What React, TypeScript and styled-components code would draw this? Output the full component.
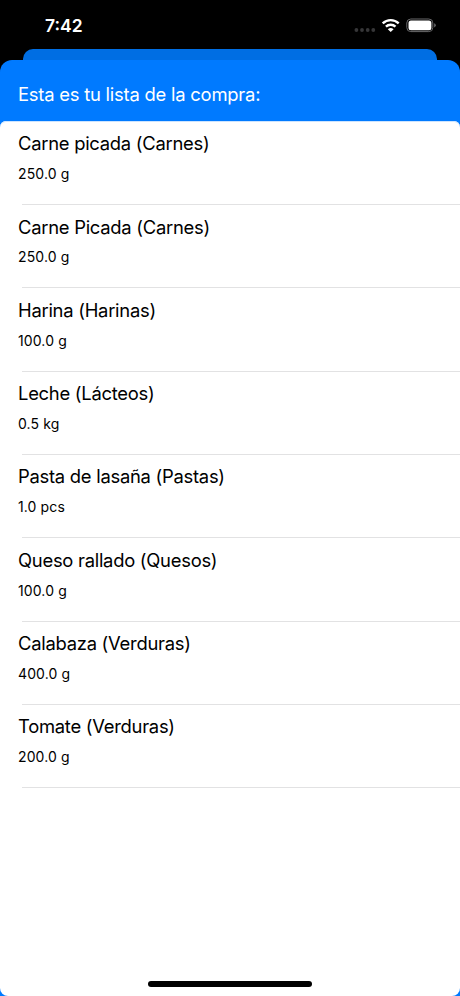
import React from "react";
import styled, { createGlobalStyle } from "styled-components";

const GlobalStyle = createGlobalStyle`
  * { box-sizing: border-box; }
  body { margin: 0; background: #000; }
`;

const Screen = styled.div`
  width: 460px;
  height: 996px;
  display: flex;
  flex-direction: column;
  overflow: hidden;
  background: #000;
  color: #000;
  font-family: Inter, "Liberation Sans", sans-serif;
`;

const StatusBar = styled.header`
  height: 49px;
  flex: none;
  display: flex;
  align-items: flex-start;
  justify-content: space-between;
  padding: 15px 24px 0 45px;
  color: #fff;
`;

const Clock = styled.span`
  font-size: 17.5px;
  line-height: 22px;
  font-weight: 600;
`;

const StatusIcons = styled.svg`
  display: block;
  width: 84px;
  height: 20px;
`;

const BackSheet = styled.div`
  height: 11px;
  flex: none;
  margin: 0 23px;
  border-radius: 10px 10px 0 0;
  background: #006ee3;
`;

const Sheet = styled.main`
  flex: 1;
  display: flex;
  flex-direction: column;
  border-radius: 12px 12px 0 0;
  background: #007aff;
`;

const Heading = styled.h1`
  margin: 0;
  height: 61px;
  flex: none;
  padding: 22px 18px 0;
  color: #fff;
  font-size: 18.4px;
  line-height: 24px;
  font-weight: 400;
  letter-spacing: -0.22px;
`;

const List = styled.ul`
  flex: 1;
  margin: 0;
  padding: 0.9px 0 0;
  list-style: none;
  border-radius: 6px 6px 8px 8px;
  box-shadow: inset 0 1px #cce4ff;
  background: #fff;
`;

const Item = styled.li`
  height: 83.3px;
  display: flex;
  flex-direction: column;
  padding: 9.35px 0 0 18px;
`;

const Name = styled.span`
  font-size: 18.4px;
  line-height: 24px;
  letter-spacing: -0.26px;
`;

const Amount = styled.span`
  margin-top: 9.8px;
  font-size: 14px;
  line-height: 18px;
  letter-spacing: 0.12px;
`;

const Divider = styled.div`
  height: 1px;
  margin: auto 0 0 4px;
  background: #e2e2e3;
`;

const HomeIndicator = styled.div`
  position: absolute;
  left: 148px;
  top: 981px;
  width: 164px;
  height: 6px;
  border-radius: 3px;
  background: #000;
`;

const items = [
  ["Carne picada (Carnes)", "250.0 g"],
  ["Carne Picada (Carnes)", "250.0 g"],
  ["Harina (Harinas)", "100.0 g"],
  ["Leche (Lácteos)", "0.5 kg"],
  ["Pasta de lasaña (Pastas)", "1.0 pcs"],
  ["Queso rallado (Quesos)", "100.0 g"],
  ["Calabaza (Verduras)", "400.0 g"],
  ["Tomate (Verduras)", "200.0 g"],
];

export default function App() {
  return (
    <Screen>
      <GlobalStyle />
      <StatusBar>
        <Clock>7:42</Clock>
        <StatusIcons viewBox="352 15 84 20">
          <g fill="#363638">
            <circle cx="356.4" cy="30" r="1.9" />
            <circle cx="362" cy="30" r="1.9" />
            <circle cx="367.7" cy="30" r="1.9" />
            <circle cx="373.3" cy="30" r="1.9" />
          </g>
          <g fill="none" stroke="#fff" strokeWidth="2.4">
            <path d="M382.7 23.4a11.5 11.5 0 0 1 16 0" />
            <path d="M385.9 26.6a7 7 0 0 1 9.6 0" />
          </g>
          <path d="M387.8 29.2a4.3 4.3 0 0 1 5.8 0l-2.9 2.9z" fill="#fff" />
          <rect x="406.8" y="19" width="26" height="12.6" rx="4" fill="none" stroke="#69696b" />
          <rect x="408.5" y="20.4" width="22.9" height="9.8" rx="2.5" fill="#fff" />
          <path d="M434.2 23.2a2.2 2.2 0 0 1 0 4.2z" fill="#69696b" />
        </StatusIcons>
      </StatusBar>
      <BackSheet />
      <Sheet>
        <Heading>Esta es tu lista de la compra:</Heading>
        <List>
          {items.map(([name, amount]) => (
            <Item key={name}>
              <Name>{name}</Name>
              <Amount>{amount}</Amount>
              <Divider />
            </Item>
          ))}
        </List>
      </Sheet>
      <HomeIndicator />
    </Screen>
  );
}
